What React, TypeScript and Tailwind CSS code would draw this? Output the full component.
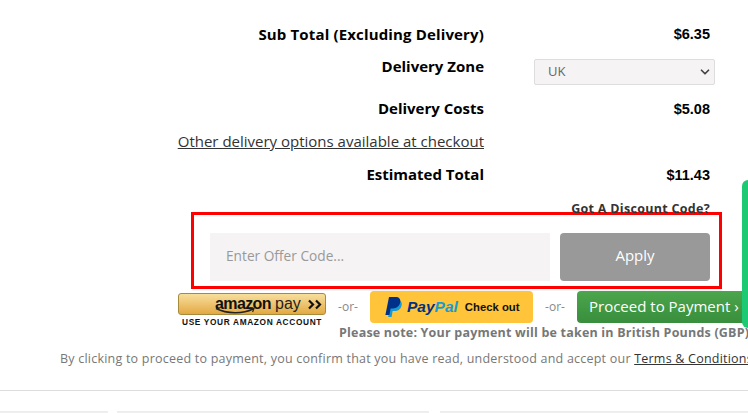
import { ChevronDown } from "lucide-react";

const sans = { fontFamily: '"Open Sans", "Liberation Sans", sans-serif' };

function SummaryRow({ label, value }: { label: string; value: string }) {
  return (
    <div className="flex h-[33px] items-center">
      <div className="w-[484px] pb-[2px] text-right text-[15px] font-bold text-black">{label}</div>
      <div className="w-[226px] text-right text-[14.5px] font-bold text-black [font-family:'Liberation_Sans',sans-serif]">{value}</div>
    </div>
  );
}

function AmazonPay() {
  return (
    <div className="ml-[178px] mt-[2px] flex w-[148px] shrink-0 flex-col">
      <div className="relative flex h-[22px] items-center rounded-[3px] border border-[#a88a3c] bg-gradient-to-b from-[#f7df9c] to-[#e3a93f] pl-[36px]">
        <span className="text-[16px] font-bold leading-none tracking-[-0.6px] text-[#111] [font-family:'Liberation_Sans',sans-serif]">amazon</span>
        <span className="ml-[4px] text-[16px] leading-none text-[#222] [font-family:'Liberation_Sans',sans-serif]">pay</span>
        <svg className="absolute left-[36px] top-[13px]" width="46" height="8" viewBox="0 0 46 8" fill="none">
          <path d="M1 1.5C12 7 28 7 38 2" stroke="#222" strokeWidth="1.4" />
          <path d="M35 1.2L39 1.4L37.6 5" stroke="#222" strokeWidth="1.2" />
        </svg>
        <svg className="absolute right-[2px] top-[5px]" width="16" height="11" viewBox="0 0 16 11" fill="none">
          <path d="M2 1.5L6 5.5L2 9.5M9 1.5L13 5.5L9 9.5" stroke="#111" strokeWidth="2.2" />
        </svg>
      </div>
      <div className="mt-[2px] whitespace-nowrap text-center text-[8.3px] font-bold leading-[10px] tracking-[0.65px] text-[#111] [font-family:'Liberation_Sans',sans-serif]">
        USE YOUR AMAZON ACCOUNT
      </div>
    </div>
  );
}

function Or() {
  return <div className="w-[44px] shrink-0 text-center text-[12px] text-[#888]">-or-</div>;
}

function PayPal() {
  return (
    <div className="flex h-[32px] w-[163px] shrink-0 items-center rounded-[4px] bg-[#ffc439] pl-[15px]">
      <svg width="17" height="20" viewBox="0 0 17 20">
        <path d="M6 3H12C15.6 3 17.4 5 16.6 8.4C15.8 12 13 14 9.6 14H7.6L6.6 20H3.2Z" fill="#169bd7" />
        <path d="M4 0H10.5C14 0 16 2 15.2 5.6C14.4 9.5 11.6 11.4 8 11.4H5.6L4.4 18H0.4Z" fill="#003087" />
      </svg>
      <span className="ml-[5px] text-[15.5px] font-bold italic leading-none text-[#003087] [font-family:'Liberation_Sans',sans-serif]">Pay</span>
      <span className="text-[15.5px] font-bold italic leading-none text-[#169bd7] [font-family:'Liberation_Sans',sans-serif]">Pal</span>
      <span className="ml-[7px] whitespace-nowrap text-[11.3px] font-bold text-[#111] [font-family:'Liberation_Sans',sans-serif]">Check out</span>
    </div>
  );
}

export default function App() {
  return (
    <div className="relative h-[413px] w-[748px] overflow-hidden bg-white" style={sans}>
      <div className="absolute right-0 top-[180px] h-[148px] w-[6px] rounded-l-[6px] bg-[#1dc973]" />

      <div className="pt-[18px]">
        <div className="flex h-[33px] items-center">
          <div className="w-[484px] text-right text-[15px] font-bold tracking-[0.15px] text-black">Sub Total (Excluding Delivery)</div>
          <div className="w-[226px] text-right text-[14.5px] font-bold text-black [font-family:'Liberation_Sans',sans-serif]">$6.35</div>
        </div>

        <div className="flex h-[33px] items-start">
          <div className="w-[484px] pt-[4px] text-right text-[15px] font-bold text-black">Delivery Zone</div>
          <div className="relative ml-[50px] mt-[8px] flex h-[26px] w-[181px] items-center rounded-[2px] border border-[#dddddd] bg-[#f5f3f4] pl-[13px] text-[13px] text-[#666]">
            UK
            <ChevronDown className="absolute right-[2px] top-[5px] h-[14px] w-[14px] text-[#444]" strokeWidth={3} />
          </div>
        </div>

        <div className="mt-[9px]">
          <SummaryRow label="Delivery Costs" value="$5.08" />
        </div>

        <div className="flex h-[33px] items-center">
          <a className="w-[484px] pb-[2px] text-right text-[15px] text-[#333] underline">Other delivery options available at checkout</a>
        </div>

        <SummaryRow label="Estimated Total" value="$11.43" />

        <div className="flex h-[33px] w-[710px] items-center justify-end pt-[2px] text-[12.5px] font-bold tracking-[0.3px] text-[#333]">
          Got A Discount Code?
        </div>
      </div>

      <div className="-mt-[13px] ml-[191px] flex h-[77px] w-[531px] gap-[10px] border-[3px] border-[#ff0000] pl-[16px] pt-[18px]">
        <div className="flex h-[48px] w-[340px] items-center bg-[#f5f3f4] pb-[2px] pl-[16px] text-[13.7px] text-[#999]">Enter Offer Code...</div>
        <div className="flex h-[48px] w-[150px] items-center justify-center rounded-[4px] bg-[#999999] pb-[3px] text-[15px] text-white">Apply</div>
      </div>

      <div className="mt-[2px] flex items-start">
        <AmazonPay />
        <div className="mt-[8px] flex h-[16px] items-center">
          <Or />
        </div>
        <PayPal />
        <div className="mt-[8px] flex h-[16px] items-center">
          <Or />
        </div>
        <div className="flex h-[32px] w-[190px] shrink-0 items-center rounded-l-[4px] bg-gradient-to-b from-[#4ca64c] to-[#388e3c] pb-[1px] pl-[12px] text-[15px] whitespace-nowrap text-white">
          Proceed to Payment ›
        </div>
      </div>

      <div className="-mt-[3px] ml-[339px] whitespace-nowrap text-[12.5px] font-bold leading-[18px] tracking-[0.2px] text-[#777]">
        Please note: Your payment will be taken in British Pounds (GBP)
      </div>

      <div className="mt-[8px] ml-[60px] whitespace-nowrap text-[12.5px] leading-[18px] tracking-[0.22px] text-[#777]">
        By clicking to proceed to payment, you confirm that you have read, understood and accept our{" "}
        <a className="text-[#333] underline">Terms &amp; Conditions</a>
      </div>

      <div className="mt-[22px] h-px w-full bg-[#dddddd]" />

      <div className="mt-[20px] flex">
        <div className="h-[2px] w-[108px] bg-[#eeeeee]" />
        <div className="ml-[9px] h-[2px] w-[312px] bg-[#eeeeee]" />
        <div className="ml-[11px] h-[2px] w-[308px] bg-[#eeeeee]" />
      </div>
    </div>
  );
}
